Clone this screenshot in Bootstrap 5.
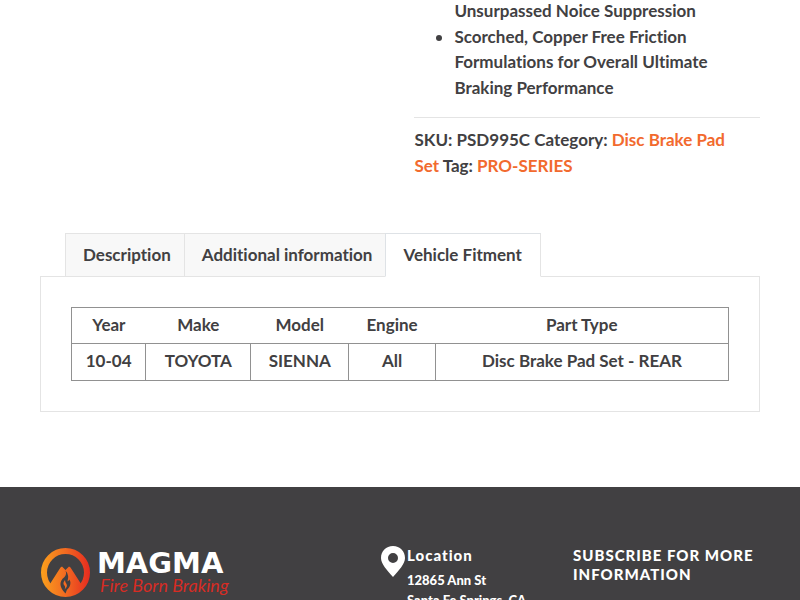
<!DOCTYPE html>
<html lang="en">
<head>
<meta charset="utf-8">
<meta name="viewport" content="width=device-width, initial-scale=1">
<title>Magma – PSD995C</title>
<link href="https://cdn.jsdelivr.net/npm/bootstrap@5.3.0/dist/css/bootstrap.min.css" rel="stylesheet">
<style>
body { font-family: Lato, "Open Sans", sans-serif; font-size: 17px; font-weight: 700; line-height: 1.5; font-variant-ligatures: none; color: #414042; background: #fff; }
.page { padding: 0 40px; }
.summary { width: 48%; margin-top: -2px; }
.summary ul { padding-left: 40px; margin-bottom: 17px; }
.continued { list-style: none; }
.product-meta { border-top: 1px solid #e4e4e4; padding: 9px 16px 0 0; margin-bottom: 55px; }
.product-meta a { color: #f26a2e; text-decoration: none; }
.fitment-tabs { padding-left: 25px; border: 0; }
.fitment-tabs .nav-link { height: 44px; margin: 0 0 -1px; padding: 0 13px 0 17px; border: 1px solid #e4e4e4; border-right: 0; border-radius: 0; background: #f8f8f8; color: #414042; line-height: 42px; }
.fitment-tabs .nav-link.active { padding-right: 18px; border-right: 1px solid #e4e4e4; border-bottom-color: #fff; background: #fff; color: #414042; }
.fitment-panel { border: 1px solid #e4e4e4; padding: 30px; margin-bottom: 75px; }
.fitment { width: 100%; border: 1px solid #919191; text-align: center; table-layout: fixed; line-height: 26px; }
.fitment th, .fitment td { padding: 4px 0 6px; font-weight: 700; }
.fitment th { padding-bottom: 5px; }
.fitment td { border: 1px solid #919191; }
.site-footer { background: #414042; color: #fff; padding: 59px 40px 0; }
.brand-logo { width: 190px; height: 54px; }
.brand-cell { width: 341px; }
.location-cell { width: 192px; }
.pin { width: 24px; height: 31px; margin-right: 2px; }
.footer-title { font-size: 15px; font-weight: 900; line-height: 19px; letter-spacing: 1px; margin: 0; }
address { font-size: 13px; font-weight: 900; line-height: 20px; margin-top: 5px; }
</style>
</head>
<body>
<div class="vh-100 overflow-hidden d-flex flex-column">
<main class="page">
  <section class="summary ms-auto">
    <ul>
      <li class="continued">Unsurpassed Noice Suppression</li>
      <li>Scorched, Copper Free Friction Formulations for Overall Ultimate Braking Performance</li>
    </ul>
    <div class="product-meta">SKU: PSD995C Category: <a href="#">Disc Brake Pad Set</a> Tag: <a href="#">PRO-SERIES</a></div>
  </section>
  <ul class="nav nav-tabs fitment-tabs flex-nowrap" role="tablist">
    <li class="nav-item"><a class="nav-link" href="#" role="tab">Description</a></li>
    <li class="nav-item"><a class="nav-link" href="#" role="tab">Additional information</a></li>
    <li class="nav-item"><a class="nav-link active" href="#fitment" role="tab" aria-selected="true">Vehicle Fitment</a></li>
  </ul>
  <section class="fitment-panel" id="fitment" role="tabpanel">
    <table class="fitment">
      <colgroup><col style="width:11.3%"><col style="width:16%"><col style="width:14.9%"><col style="width:13.2%"><col></colgroup>
      <thead><tr><th>Year</th><th>Make</th><th>Model</th><th>Engine</th><th>Part Type</th></tr></thead>
      <tbody><tr><td>10-04</td><td>TOYOTA</td><td>SIENNA</td><td>All</td><td>Disc Brake Pad Set - REAR</td></tr></tbody>
    </table>
  </section>
</main>
<footer class="site-footer d-flex flex-grow-1">
  <div class="brand-cell flex-shrink-0">
    <svg class="brand-logo" viewBox="0 0 190 54" role="img" aria-label="Magma Fire Born Braking">
      <defs><linearGradient id="flame" gradientUnits="userSpaceOnUse" x1="1" x2="50" y1="0" y2="0"><stop offset="0" stop-color="#fba01c"/><stop offset=".5" stop-color="#f26a21"/><stop offset="1" stop-color="#e52b20"/></linearGradient></defs>
      <circle cx="25.500" cy="26.500" r="21.500" fill="none" stroke="url(#flame)" stroke-width="6"/>
      <path fill="url(#flame)" d="M8 41 L20.500 21.500 L22 20.500 L25.500 24 L29 20.500 L30.500 21.500 L43 41 Q37 50 25.500 50 Q14 50 8 41 Z"/>
      <path fill="#414042" d="M25.500 24.500 Q27 28 24.500 31 Q20 34.500 20.500 39 Q21 43 25.500 47.500 Q26 44 29 41.500 Q31.500 37.500 29.500 33.500 Q28.500 35 27.500 35.500 Q29.500 29 25.500 24.500 Z"/>
      <path fill="#f26a21" d="M25 34 Q22.500 37 24 39 Q26 41 24.500 43.500 Q28 40.500 26.500 38 Q25 36 25 34 Z"/>
      <text x="57" y="27" font-family="DejaVu Sans, sans-serif" font-size="29" font-weight="700" fill="#fff">MAGMA</text>
      <text x="60" y="46" font-family="Lato, sans-serif" font-size="18" font-style="italic" font-weight="400" fill="#d62c24">Fire Born Braking</text>
    </svg>
  </div>
  <div class="location-cell d-flex align-items-start flex-shrink-0">
    <svg class="pin flex-shrink-0" viewBox="0 0 24 31" aria-hidden="true"><path fill="#fff" fill-rule="evenodd" d="M12 0C5 0 0 5 0 12c0 6 6 12 12 19 6-7 12-13 12-19C24 5 19 0 12 0Zm0 7a5 5 0 1 1 0 10 5 5 0 0 1 0-10Z"/></svg>
    <div>
      <h2 class="footer-title">Location</h2>
      <address>12865 Ann St<br>Santa Fe Springs, CA</address>
    </div>
  </div>
  <h2 class="footer-title">SUBSCRIBE FOR MORE INFORMATION</h2>
</footer>
</div>
<script src="https://cdn.jsdelivr.net/npm/bootstrap@5.3.0/dist/js/bootstrap.bundle.min.js"></script>
</body>
</html>
